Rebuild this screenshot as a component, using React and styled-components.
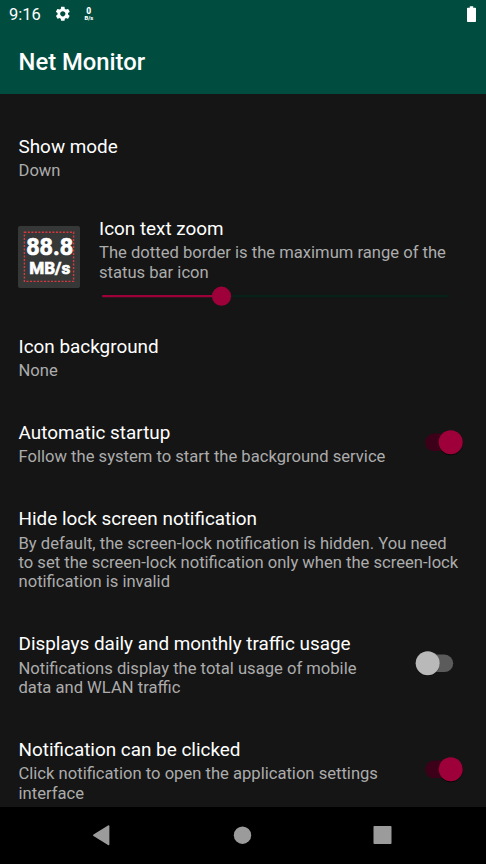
import React from "react";
import styled, { createGlobalStyle } from "styled-components";

const GlobalStyle = createGlobalStyle`
  * { box-sizing: border-box; }
  body { margin: 0; background: #151515; }
`;

const Screen = styled.div`
  display: flex;
  flex-direction: column;
  width: 486px;
  height: 864px;
  overflow: hidden;
  background: #151515;
  color: #fff;
  font-family: Roboto, sans-serif;
`;

const Header = styled.header`
  flex: none;
  height: 94px;
  background: #004d40;
`;

const StatusBar = styled.div`
  display: flex;
  align-items: center;
  height: 28px;
  padding: 0 10px 0 9px;
`;

const Clock = styled.span`
  width: 44.7px;
  font-size: 16.5px;
  line-height: 28px;
  padding-top: 1px;
`;

const NetSpeed = styled.span`
  display: flex;
  flex-direction: column;
  align-items: center;
  width: 12px;
  margin-left: 11.5px;
  font-weight: 900;
  font-size: 8.5px;
  line-height: 8px;
`;

const SpeedUnit = styled.span`
  font-size: 5.8px;
  line-height: 6px;
`;

const Battery = styled.svg`
  margin-left: auto;
`;

const AppTitle = styled.h1`
  margin: 0;
  padding-left: 18.5px;
  font-size: 23.8px;
  font-weight: 500;
  line-height: 68px;
`;

const List = styled.main`
  flex: 1;
  min-height: 0;
  overflow: hidden;
  padding-top: 19px;
`;

const Row = styled.section`
  display: flex;
  align-items: center;
  height: ${(p) => p.$height}px;
  padding: 0 18.5px;
`;

const RowText = styled.div`
  flex: 1;
  white-space: nowrap;
  padding-top: ${(p) => p.$offset || 0}px;
`;

const RowTitle = styled.div`
  font-size: 18.9px;
  line-height: 25px;
`;

const Summary = styled.div`
  font-size: 16.6px;
  line-height: 19.4px;
  padding-top: 2.3px;
  margin-bottom: -2.3px;
  color: #acacac;
`;

const IconPreview = styled.div`
  align-self: flex-start;
  flex: none;
  width: 62px;
  height: 62px;
  margin: 26.6px 19px 0 -0.5px;
  padding: 5px;
  border-radius: 2px;
  background: #363838;
`;

const Slider = styled.svg`
  display: block;
  margin: 4.5px 0 0 -7px;
`;

const Toggle = styled.svg`
  flex: none;
  margin-right: -6px;
`;

const NavBar = styled.nav`
  flex: none;
  display: flex;
  height: 57px;
  background: #000;
`;

const NavIcons = styled.svg`
  display: block;
`;

function Switch({ on }) {
  return (
    <Toggle width="60" height="32" viewBox="0 0 60 32">
      {on ? (
        <>
          <rect x="11.2" y="7.6" width="38" height="17.4" rx="8.7" fill="#3d0019" />
          <circle cx="36.7" cy="17.3" r="12" fill="#050505" opacity="0.75" />
          <circle cx="36.7" cy="16.2" r="12" fill="#9e0039" />
        </>
      ) : (
        <>
          <rect x="1.7" y="7.6" width="37.5" height="17.4" rx="8.7" fill="#5b5b5b" />
          <circle cx="13.7" cy="17" r="12" fill="#080808" opacity="0.6" />
          <circle cx="13.7" cy="16.2" r="12" fill="#b9b9b9" />
        </>
      )}
    </Toggle>
  );
}

function Setting({ title, lines, height, toggle }) {
  return (
    <Row $height={height}>
      <RowText>
        <RowTitle>{title}</RowTitle>
        <Summary>
          {lines.map((line) => (
            <div key={line}>{line}</div>
          ))}
        </Summary>
      </RowText>
      {toggle && <Switch on={toggle === "on"} />}
    </Row>
  );
}

export default function App() {
  return (
    <Screen>
      <GlobalStyle />
      <Header>
        <StatusBar>
          <Clock>9:16</Clock>
          <svg width="17.6" height="17.6" viewBox="0 0 24 24" fill="#fff">
            <path d="M19.14 12.94c.04-.3.06-.61.06-.94 0-.32-.02-.64-.07-.94l2.03-1.58a.49.49 0 0 0 .12-.61l-1.92-3.32a.488.488 0 0 0-.59-.22l-2.39.96c-.5-.38-1.03-.7-1.62-.94l-.36-2.54a.484.484 0 0 0-.48-.41h-3.84c-.24 0-.43.17-.47.41l-.36 2.54c-.59.24-1.13.57-1.62.94l-2.39-.96c-.22-.08-.47 0-.59.22L2.74 8.87c-.12.21-.08.47.12.61l2.03 1.58c-.05.3-.09.63-.09.94s.02.64.07.94l-2.03 1.58a.49.49 0 0 0-.12.61l1.92 3.32c.12.22.37.29.59.22l2.39-.96c.5.38 1.03.7 1.62.94l.36 2.54c.05.24.24.41.48.41h3.84c.24 0 .44-.17.47-.41l.36-2.54c.59-.24 1.13-.56 1.62-.94l2.39.96c.22.08.47 0 .59-.22l1.92-3.32c.12-.22.07-.47-.12-.61l-2.01-1.58zM12 15.6c-1.98 0-3.6-1.62-3.6-3.6s1.62-3.6 3.6-3.6 3.6 1.62 3.6 3.6-1.62 3.6-3.6 3.6z" />
          </svg>
          <NetSpeed>
            0<SpeedUnit>B/s</SpeedUnit>
          </NetSpeed>
          <Battery width="9" height="17" viewBox="0 0 9 17">
            <path d="M2.8 0.3h3.4v1.4H8.2q.8 0 .8.8V15.3q0 .8-.8.8H.8q-.8 0-.8-.8V2.5q0-.8.8-.8h2z" fill="#fff" />
          </Battery>
        </StatusBar>
        <AppTitle>Net Monitor</AppTitle>
      </Header>

      <List>
        <Setting title="Show mode" lines={["Down"]} height={86.4} />
        <Row $height={113.2}>
          <IconPreview>
            <svg width="52" height="52" viewBox="0 0 52 52">
              <rect x="1.4" y="1.2" width="49.2" height="49.2" fill="none" stroke="#d8383e" strokeWidth="1.4" strokeDasharray="2 1.5" />
              <text fill="#fff" stroke="#fff" strokeWidth="0.7" fontFamily="Roboto, sans-serif" fontWeight="700">
                <tspan x="3.2" y="24.4" fontSize="24" textLength="47" lengthAdjust="spacingAndGlyphs">88.8</tspan>
                <tspan x="6.2" y="43.2" fontSize="17.2" textLength="41" lengthAdjust="spacingAndGlyphs">MB/s</tspan>
              </text>
            </svg>
          </IconPreview>
          <RowText $offset={12.4}>
            <RowTitle>Icon text zoom</RowTitle>
            <Summary>
              <div>The dotted border is the maximum range of the</div>
              <div>status bar icon</div>
            </Summary>
            <Slider width="370" height="24" viewBox="0 0 370 24">
              <rect x="10" y="10.9" width="347" height="2.4" fill="#07211a" />
              <rect x="10" y="10.9" width="119" height="2.4" rx="1" fill="#9e0039" />
              <circle cx="129.5" cy="12.2" r="9.6" fill="#9e0039" />
            </Slider>
          </RowText>
        </Row>
        <Setting title="Icon background" lines={["None"]} height={86.4} />
        <Setting title="Automatic startup" lines={["Follow the system to start the background service"]} height={86.3} toggle="on" />
        <Setting
          title="Hide lock screen notification"
          lines={[
            "By default, the screen-lock notification is hidden. You need",
            "to set the screen-lock notification only when the screen-lock",
            "notification is invalid",
          ]}
          height={125.1}
        />
        <Setting
          title="Displays daily and monthly traffic usage"
          lines={["Notifications display the total usage of mobile", "data and WLAN traffic"]}
          height={105.7}
          toggle="off"
        />
        <Setting
          title="Notification can be clicked"
          lines={["Click notification to open the application settings", "interface"]}
          height={105.8}
          toggle="on"
        />
      </List>

      <NavBar>
        <NavIcons width="486" height="57" viewBox="0 0 486 57" fill="#9b9b9b">
          <path d="M108 18.4q1.4-.8 1.4.8v18q0 1.6-1.4.8L93.5 29q-1.2-.8 0-1.6z" />
          <circle cx="242.5" cy="28.2" r="8.7" />
          <rect x="373.5" y="19" width="18" height="18" rx="0.8" />
        </NavIcons>
      </NavBar>
    </Screen>
  );
}
